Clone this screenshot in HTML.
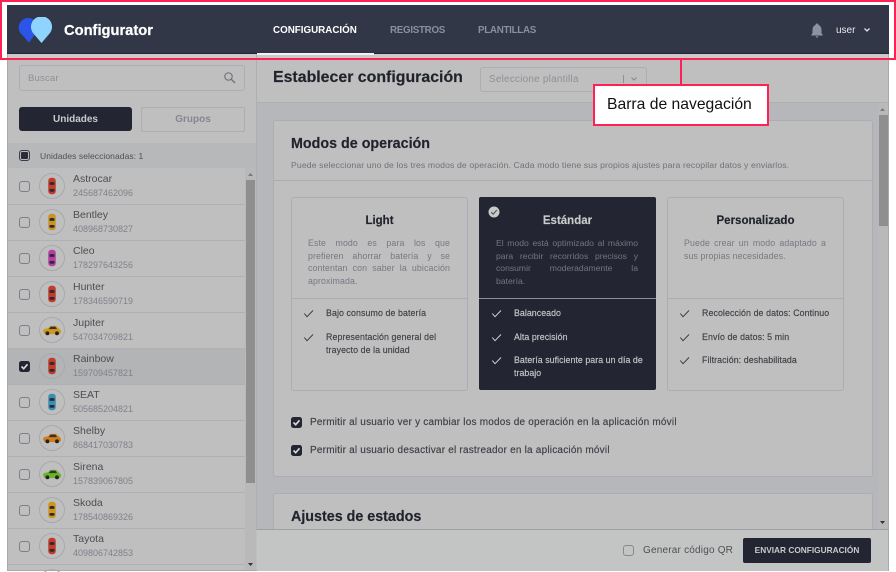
<!DOCTYPE html>
<html lang="es"><head><meta charset="utf-8"><title>Configurator</title>
<style>
html,body{margin:0;padding:0;background:#fff}
#s{position:relative;width:896px;height:572px;overflow:hidden;background:#fff;font-family:"Liberation Sans",sans-serif;color:#3c3f46}
#s div,#s svg{position:absolute}
#s .l{position:static;display:block;white-space:nowrap;text-align:justify;text-align-last:justify}
#s .l.e{text-align-last:left}
.t{white-space:nowrap}
.cb{width:9px;height:9px;border:1px solid #7c7f87;border-radius:3px}
.name{left:73px;font-size:10.5px;color:#4c4e53;white-space:nowrap}
.num{left:73px;font-size:9px;color:#7f828a;white-space:nowrap}
.circ{left:39px;width:24px;height:24px;border:1px solid #a8a9ad;border-radius:50%}
.row{left:8px;width:237px;height:1px;background:#b0b1b4}
.card{top:197px;height:192px;border:1px solid #abadb2;border-radius:3px}
.h{font-size:11.5px;font-weight:bold;text-align:center;white-space:nowrap;color:#1f222b;-webkit-text-stroke:.15px}
.p{font-size:8.8px;line-height:12.5px;color:#767982;letter-spacing:.1px}
.f{font-size:8.8px;line-height:12.5px;color:#3e4046;letter-spacing:.1px;-webkit-text-stroke:.15px}
.d .f{color:#c6c7c9;letter-spacing:.05px}
.n{top:25px;font-size:9.8px;font-weight:bold;color:#8a8f9c;letter-spacing:-.3px}
.b{font-size:10px;color:#3c3f46;letter-spacing:.21px;-webkit-text-stroke:.15px}
.c{width:10px;height:18px}
.c2{width:20px;height:14px}
</style></head><body>
<div id="s">
<svg width="0" height="0" style="left:0;top:0">
<symbol id="car" viewBox="0 0 12 24">
<rect x="1" y="1" width="10" height="22" rx="4" fill="currentColor"/>
<path d="M2.500 7.500 Q6 5.500 9.500 7.500 L9 10.500 H3Z M3 16H9L9.500 19Q6 20.500 2.500 19Z" fill="#2b2b2f"/>
</symbol>
<symbol id="side" viewBox="0 0 24 14">
<path d="M1 8Q2 5 7 5L10 2H17L21 6Q23 7 23 10L21 12H3Z" fill="currentColor"/>
<path d="M10.500 3H16L18 6H8Z" fill="#333"/>
<circle cx="6.500" cy="11" r="2.300" fill="#222"/><circle cx="18" cy="11" r="2.300" fill="#222"/>
</symbol>
<symbol id="chk" viewBox="0 0 11 11"><path d="M.3 5.500L3 8.700L9 2.500" fill="none" stroke="currentColor" stroke-width=".9"/></symbol>
<symbol id="box" viewBox="0 0 11 11"><rect width="11" height="11" rx="2.500" fill="#232632"/><path d="M2.500 5.500L4.700 7.700L8.500 3.300" fill="none" stroke="#dcdcdc" stroke-width="1.600"/></symbol>
</svg>

<!-- app background -->
<div style="left:7px;top:54px;width:882px;height:517px;background:#bfbfbf"></div>
<div style="left:7px;top:54px;width:882px;height:4px;background:#c9c9c9"></div>
<div style="left:7px;top:5px;width:1px;height:566px;background:#a9a9a9"></div>
<div style="left:888px;top:5px;width:1px;height:566px;background:#a9a9a9"></div>
<div style="left:7px;top:570px;width:882px;height:1px;background:#a9a9a9"></div>

<!-- nav -->
<div style="left:7px;top:5px;width:882px;height:49px;background:#313746"></div>
<div style="left:7px;top:53px;width:882px;height:1px;background:#23262f"></div>
<svg style="left:18px;top:17px" width="35" height="27" viewBox="0 0 35 27">
<path d="M11 25.500L2.500 16A9.500 9.500 0 1 1 18 16Z" fill="#2b55e8"/>
<path d="M23.500 26L15 16A10.500 10.500 0 1 1 32 16Z" fill="#8fd4fd"/>
</svg>
<div class="t" style="left:64px;top:23px;font-size:14.700px;font-weight:bold;color:#fff;-webkit-text-stroke:.25px">Configurator</div>
<div class="t n" style="left:273px;color:#fff;letter-spacing:0">CONFIGURACIÓN</div>
<div style="left:257px;top:53px;width:117px;height:2px;background:#f2f2f2"></div>
<div class="t n" style="left:390px">REGISTROS</div>
<div class="t n" style="left:478px">PLANTILLAS</div>
<svg style="left:810px;top:23px" width="14" height="15" viewBox="0 0 14 15"><path d="M7 .5C8 .5 8.500 1 8.500 2C10.500 2.800 11.500 4.500 11.500 7V10L13 12.500H1L2.500 10V7C2.500 4.500 3.500 2.800 5.500 2C5.500 1 6 .5 7 .5ZM5.500 13.200H8.500Q8 14.600 7 14.600T5.500 13.200Z" fill="#8c92a0"/></svg>
<div class="t" style="left:836px;top:25px;font-size:10px;color:#e8e9ec">user</div>
<svg style="left:863px;top:27px" width="8" height="6" viewBox="0 0 8 6"><path d="M1.500 1.500L4 4L6.500 1.500" fill="none" stroke="#e2e3e6" stroke-width="1.300"/></svg>

<!-- sidebar -->
<div style="left:256px;top:54px;width:1px;height:476px;background:#adafb2"></div>
<div style="left:19px;top:65px;width:224px;height:24px;border:1px solid #acaeb3;border-radius:3px"></div>
<div class="t" style="left:28px;top:73px;font-size:9.500px;color:#8d9096;letter-spacing:.2px">Buscar</div>
<svg style="left:223px;top:71px" width="13" height="13" viewBox="0 0 13 13"><circle cx="5.500" cy="5.500" r="3.700" fill="none" stroke="#70737a" stroke-width="1.200"/><path d="M8.300 8.300L12 12" stroke="#70737a" stroke-width="1.400"/></svg>
<div style="left:19px;top:107px;width:113px;height:24px;background:#232632;border-radius:3px"></div>
<div class="t" style="left:19px;top:114px;width:113px;text-align:center;font-size:10px;font-weight:bold;color:#c9cacc">Unidades</div>
<div style="left:141px;top:107px;width:102px;height:23px;border:1px solid #acaeb3;border-radius:2px"></div>
<div class="t" style="left:141px;top:114px;width:104px;text-align:center;font-size:10px;font-weight:bold;color:#84878e">Grupos</div>

<div style="left:8px;top:143px;width:248px;height:25px;background:#b7b8b9"></div>
<div style="left:19px;top:150px;width:9px;height:9px;border:1px solid #3a3d46;border-radius:3px"></div>
<div style="left:21px;top:152px;width:7px;height:7px;background:#2a2d37;border-radius:1px"></div>
<div class="t" style="left:40px;top:151px;font-size:8.500px;color:#4e5056;letter-spacing:.07px">Unidades seleccionadas: 1</div>

<!-- list scrollbar -->
<div style="left:245px;top:168px;width:11px;height:402px;background:#b9b9b9"></div>
<div style="left:246px;top:180px;width:9px;height:303px;background:#8f8f8f"></div>
<svg style="left:247px;top:172px" width="7" height="5"><path d="M3.500 1L6 4H1Z" fill="#7a7a7a"/></svg>
<svg style="left:247px;top:562px" width="7" height="5"><path d="M1 1H6L3.500 4Z" fill="#333"/></svg>

<!-- rows -->
<div style="left:8px;top:348px;width:237px;height:36px;background:#b3b4b5"></div>
<div class="row" style="top:204px"></div><div class="row" style="top:240px"></div><div class="row" style="top:276px"></div><div class="row" style="top:312px"></div><div class="row" style="top:348px"></div><div class="row" style="top:384px"></div><div class="row" style="top:420px"></div><div class="row" style="top:456px"></div><div class="row" style="top:492px"></div><div class="row" style="top:528px"></div><div class="row" style="top:564px"></div>

<div class="cb" style="left:19px;top:181px"></div>
<div class="cb" style="left:19px;top:217px"></div>
<div class="cb" style="left:19px;top:253px"></div>
<div class="cb" style="left:19px;top:289px"></div>
<div class="cb" style="left:19px;top:325px"></div>
<svg style="left:19px;top:361px" width="11" height="11"><use href="#box"/></svg>
<div class="cb" style="left:19px;top:397px"></div>
<div class="cb" style="left:19px;top:433px"></div>
<div class="cb" style="left:19px;top:469px"></div>
<div class="cb" style="left:19px;top:505px"></div>
<div class="cb" style="left:19px;top:541px"></div>

<div class="circ" style="top:173px"></div><svg class="c" style="left:47px;top:177px;color:#c23b2d"><use href="#car"/></svg>
<div class="circ" style="top:209px"></div><svg class="c" style="left:47px;top:213px;color:#c99326"><use href="#car"/></svg>
<div class="circ" style="top:245px"></div><svg class="c" style="left:47px;top:249px;color:#b43ea5"><use href="#car"/></svg>
<div class="circ" style="top:281px"></div><svg class="c" style="left:47px;top:285px;color:#c23b2d"><use href="#car"/></svg>
<div class="circ" style="top:317px"></div><svg class="c2" style="left:42px;top:323px;color:#d2991f"><use href="#side"/></svg>
<div class="circ" style="top:353px"></div><svg class="c" style="left:47px;top:357px;color:#c23b2d"><use href="#car"/></svg>
<div class="circ" style="top:389px"></div><svg class="c" style="left:47px;top:393px;color:#3b8fb4"><use href="#car"/></svg>
<div class="circ" style="top:425px"></div><svg class="c2" style="left:42px;top:431px;color:#d17f1c"><use href="#side"/></svg>
<div class="circ" style="top:461px"></div><svg class="c2" style="left:42px;top:467px;color:#6bb32b"><use href="#side"/></svg>
<div class="circ" style="top:497px"></div><svg class="c" style="left:47px;top:501px;color:#d1951f"><use href="#car"/></svg>
<div class="circ" style="top:533px"></div><svg class="c" style="left:47px;top:537px;color:#c23b2d"><use href="#car"/></svg>
<div class="circ" style="top:569px"></div>

<div class="name" style="top:173px">Astrocar</div><div class="num" style="top:188px">245687462096</div>
<div class="name" style="top:209px">Bentley</div><div class="num" style="top:224px">408968730827</div>
<div class="name" style="top:245px">Cleo</div><div class="num" style="top:260px">178297643256</div>
<div class="name" style="top:281px">Hunter</div><div class="num" style="top:296px">178346590719</div>
<div class="name" style="top:317px">Jupiter</div><div class="num" style="top:332px">547034709821</div>
<div class="name" style="top:353px">Rainbow</div><div class="num" style="top:368px">159709457821</div>
<div class="name" style="top:389px">SEAT</div><div class="num" style="top:404px">505685204821</div>
<div class="name" style="top:425px">Shelby</div><div class="num" style="top:440px">868417030783</div>
<div class="name" style="top:461px">Sirena</div><div class="num" style="top:476px">157839067805</div>
<div class="name" style="top:497px">Skoda</div><div class="num" style="top:512px">178540869326</div>
<div class="name" style="top:533px">Tayota</div><div class="num" style="top:548px">409806742853</div>

<!-- main -->
<div style="left:257px;top:102px;width:631px;height:428px;background:#b5b7ba"></div>
<div style="left:257px;top:102px;width:631px;height:1px;background:#adafb2"></div>
<div class="t" style="left:273px;top:69px;font-size:15.900px;font-weight:bold;color:#20232c;-webkit-text-stroke:.15px">Establecer configuración</div>
<div style="left:480px;top:67px;width:165px;height:23px;border:1px solid #acaeb3;border-radius:3px"></div>
<div class="t" style="left:489px;top:74px;font-size:10px;color:#8d9096;letter-spacing:.2px">Seleccione plantilla</div>
<div style="left:623px;top:75px;width:1px;height:8px;background:#8d9096"></div>
<svg style="left:630px;top:76px" width="8" height="6"><path d="M1.500 1.500L4 4L6.500 1.500" fill="none" stroke="#85888f" stroke-width="1.100"/></svg>

<!-- right scrollbar -->
<div style="left:878px;top:103px;width:10px;height:427px;background:#b9b9b9"></div>
<div style="left:879px;top:115px;width:9px;height:111px;background:#8f8f8f"></div>
<svg style="left:879px;top:107px" width="7" height="5"><path d="M3.500 1L6 4H1Z" fill="#7a7a7a"/></svg>
<svg style="left:879px;top:520px" width="7" height="5"><path d="M1 1H6L3.500 4Z" fill="#333"/></svg>

<!-- card 1 -->
<div style="left:273px;top:120px;width:598px;height:355px;background:#bfbfbf;border:1px solid #abadb2;border-radius:3px"></div>
<div class="t" style="left:291px;top:136px;font-size:14.300px;font-weight:bold;color:#20232c;-webkit-text-stroke:.15px">Modos de operación</div>
<div class="t" style="left:291px;top:160px;font-size:8.700px;color:#6f727b;letter-spacing:.105px">Puede seleccionar uno de los tres modos de operación. Cada modo tiene sus propios ajustes para recopilar datos y enviarlos.</div>
<div style="left:274px;top:180px;width:598px;height:1px;background:#abadb2"></div>

<div class="card" style="left:291px;width:175px"></div>
<div style="left:291px;top:298px;width:177px;height:1px;background:#abadb2"></div>
<div class="h" style="left:291px;top:215px;width:177px">Light</div>
<div class="p" style="left:308px;top:237px;width:142px"><span class="l">Este modo es para los que</span><span class="l">prefieren ahorrar batería y se</span><span class="l">contentan con saber la ubicación</span><span class="l e">aproximada.</span></div>
<svg style="left:304px;top:308px;color:#33363d" width="11" height="11"><use href="#chk"/></svg>
<div class="f t" style="left:326px;top:307px">Bajo consumo de batería</div>
<svg style="left:304px;top:332px;color:#33363d" width="11" height="11"><use href="#chk"/></svg>
<div class="f" style="left:326px;top:331px;width:125px">Representación general del trayecto de la unidad</div>

<div class="d" style="left:479px;top:197px;width:177px;height:193px;background:#232632;border-radius:2px">
<div class="h" style="left:0;top:18px;width:177px;color:#c9cacc">Estándar</div>
<div class="p" style="left:17px;top:40px;width:142px;color:#73767f;letter-spacing:0;font-size:8.600px"><span class="l">El modo está optimizado al máximo</span><span class="l">para recibir recorridos precisos y</span><span class="l">consumir moderadamente la</span><span class="l e">batería.</span></div>
<div style="left:0;top:101px;width:177px;height:1px;background:#8d8f96"></div>
<svg style="left:13px;top:111px;color:#d8d8d8" width="11" height="11"><use href="#chk"/></svg>
<div class="f t" style="left:35px;top:110px">Balanceado</div>
<svg style="left:13px;top:135px;color:#d8d8d8" width="11" height="11"><use href="#chk"/></svg>
<div class="f t" style="left:35px;top:134px">Alta precisión</div>
<svg style="left:13px;top:158px;color:#d8d8d8" width="11" height="11"><use href="#chk"/></svg>
<div class="f" style="left:35px;top:157px;width:135px">Batería suficiente para un día de trabajo</div>
</div>
<svg style="left:488px;top:206px" width="12" height="12" viewBox="0 0 12 12"><circle cx="6" cy="6" r="5.500" fill="#c9cacc"/><path d="M3.200 6.200L5.200 8.200L8.800 4" fill="none" stroke="#555" stroke-width="1.100"/></svg>

<div class="card" style="left:667px;width:175px"></div>
<div style="left:667px;top:298px;width:177px;height:1px;background:#abadb2"></div>
<div class="h" style="left:667px;top:215px;width:177px">Personalizado</div>
<div class="p" style="left:684px;top:237px;width:142px"><span class="l">Puede crear un modo adaptado a</span><span class="l e">sus propias necesidades.</span></div>
<svg style="left:680px;top:308px;color:#33363d" width="11" height="11"><use href="#chk"/></svg>
<div class="f t" style="left:702px;top:307px">Recolección de datos: Continuo</div>
<svg style="left:680px;top:332px;color:#33363d" width="11" height="11"><use href="#chk"/></svg>
<div class="f t" style="left:702px;top:331px">Envío de datos: 5 min</div>
<svg style="left:680px;top:355px;color:#33363d" width="11" height="11"><use href="#chk"/></svg>
<div class="f t" style="left:702px;top:354px">Filtración: deshabilitada</div>

<svg style="left:291px;top:417px" width="11" height="11"><use href="#box"/></svg>
<div class="t b" style="left:310px;top:417px">Permitir al usuario ver y cambiar los modos de operación en la aplicación móvil</div>
<svg style="left:291px;top:445px" width="11" height="11"><use href="#box"/></svg>
<div class="t b" style="left:310px;top:445px">Permitir al usuario desactivar el rastreador en la aplicación móvil</div>

<!-- card 2 -->
<div style="left:273px;top:493px;width:598px;height:37px;background:#bfbfbf;border:1px solid #abadb2;border-bottom:0;border-radius:3px 3px 0 0"></div>
<div class="t" style="left:291px;top:509px;font-size:14.300px;font-weight:bold;color:#20232c;-webkit-text-stroke:.15px">Ajustes de estados</div>

<!-- bottom bar -->
<div style="left:257px;top:529px;width:631px;height:41px;background:#c3c4c4;border-top:1px solid #9fa0a3"></div>
<div class="cb" style="left:623px;top:545px;border-color:#85888f"></div>
<div class="t" style="left:643px;top:545px;font-size:10px;color:#4e5056;letter-spacing:.2px">Generar código QR</div>
<div style="left:743px;top:538px;width:128px;height:25px;background:#232632;border-radius:2px"></div>
<div class="t" style="left:743px;top:545px;width:128px;text-align:center;font-size:8.300px;font-weight:bold;color:#c9cacc">ENVIAR CONFIGURACIÓN</div>

<!-- annotation -->
<div style="left:0;top:0;width:892px;height:56px;border:2px solid #ff2056"></div>
<div style="left:680px;top:59px;width:2px;height:26px;background:#ff2056"></div>
<div style="left:593px;top:84px;width:172px;height:38px;background:#fff;border:2px solid #ff2056"></div>
<div class="t" style="left:607px;top:96px;font-size:15.700px;color:#111">Barra de navegación</div>
</div>
</body></html>
